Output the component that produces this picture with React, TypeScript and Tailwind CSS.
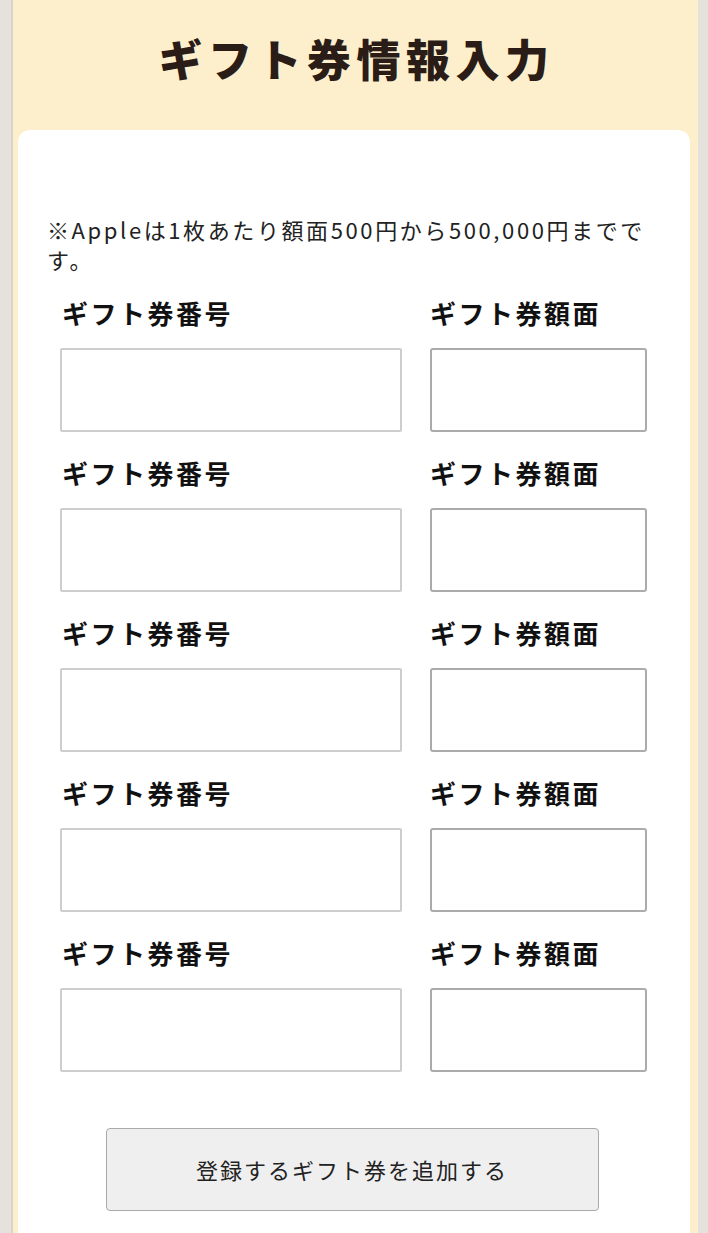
import React from "react";

const jp = { fontFamily: '"Noto Sans CJK JP", "Noto Sans", sans-serif' };

function Row() {
  return (
    <div className="grid grid-cols-[342px_217px] gap-x-[28px]">
      <div className="h-[36px] leading-[34px] pl-[2px] text-[26px] font-bold tracking-[2.5px] text-[#111]">ギフト券番号</div>
      <div className="h-[36px] leading-[34px] text-[26px] font-bold tracking-[2.5px] text-[#111]">ギフト券額面</div>
      <input className="mt-[16px] h-[84px] w-full border-2 border-[#cdcdcd] rounded-[2px] bg-white outline-none" type="text" />
      <input className="mt-[16px] h-[84px] w-full border-2 border-[#ababab] rounded-[3px] bg-white outline-none" type="text" />
    </div>
  );
}

export default function App() {
  return (
    <div className="w-[708px] h-[1233px] overflow-hidden bg-[#e4e2db] flex" style={jp}>
      <div className="ml-[11px] w-[687px] h-full bg-[#fdefcc] border-l-2 border-[#d6d4cd] flex flex-col">
        <div className="h-[130px] flex items-center justify-center pl-[2px] pb-[14px]">
          <h1 className="text-[44px] font-black tracking-[5.5px] text-[#2a1c17]">ギフト券情報入力</h1>
        </div>
        <div className="ml-[5px] w-[672px] flex-1 bg-white rounded-t-[12px] pt-[84px]">
          <p className="pl-[29px] text-[22px] leading-[30px] text-[#222] tracking-[2.6px] whitespace-nowrap">
            ※Appleは1枚あたり額面500円から500,000円までで<br />す。
          </p>
          <div className="mt-[22px] pl-[42px] flex flex-col gap-[24px]">
            <Row />
            <Row />
            <Row />
            <Row />
            <Row />
          </div>
          <div className="mt-[56px] flex justify-center pr-[4px]">
            <button className="w-[493px] h-[83px] bg-[#efefef] border border-[#a9a9a9] rounded-[4px] text-[22px] tracking-[2px] text-[#222]">
              登録するギフト券を追加する
            </button>
          </div>
        </div>
      </div>
    </div>
  );
}
